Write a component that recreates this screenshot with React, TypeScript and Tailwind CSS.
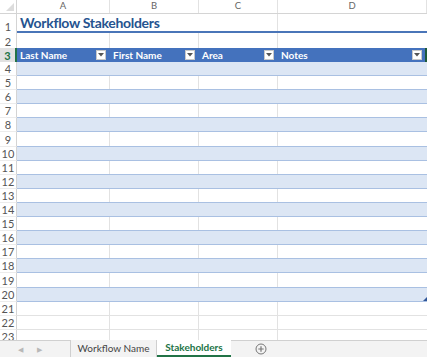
import React from "react";

const cols = [
  { w: "w-[93px]", label: "A", head: "Last Name" },
  { w: "w-[89px]", label: "B", head: "First Name" },
  { w: "w-[79px]", label: "C", head: "Area" },
  { w: "flex-1", label: "D", head: "Notes" },
];

function Drop() {
  return (
    <div className="w-[10px] h-[10px] bg-white border border-[#c8c8c8] flex items-center justify-center mr-[3px]">
      <svg width="6" height="4" viewBox="0 0 6 4">
        <path d="M0 0 L6 0 L3 3.5 Z" fill="#555" />
      </svg>
    </div>
  );
}

export default function App() {
  const rows = Array.from({ length: 20 }, (_, i) => i + 4);
  return (
    <div
      className="w-[427px] h-[357px] bg-white overflow-hidden flex flex-col"
      style={{ fontFamily: "Lato, 'Open Sans', 'Liberation Sans', sans-serif" }}
    >
      <div className="flex-1 overflow-hidden flex flex-col">
        {/* column headers */}
        <div className="flex h-[14px] shrink-0 border-b border-[#d4d4d4] bg-white">
          <div className="w-[17px] border-r border-[#d4d4d4] relative">
            <svg className="absolute right-[2px] bottom-[2px]" width="8" height="8" viewBox="0 0 8 8">
              <path d="M8 0 L8 8 L0 8 Z" fill="#dcdcdc" />
            </svg>
          </div>
          {cols.map((c) => (
            <div
              key={c.label}
              className={`${c.w} border-r border-[#e2e2e2] flex items-center justify-center text-[9.5px] text-[#666]`}
            >
              {c.label}
            </div>
          ))}
        </div>
        {/* row 1 */}
        <div className="flex h-[19px] shrink-0">
          <div className="w-[17px] border-r border-[#d4d4d4] flex items-end justify-center pb-[1px] text-[11px] leading-none text-[#555]">1</div>
          <div className="flex-1 relative border-b-2 border-[#4a75b8]">
            <div className="absolute left-[3px] top-[0px] text-[14px] leading-[17px] font-bold tracking-[-0.3px] text-[#25538f] whitespace-nowrap">
              Workflow Stakeholders
            </div>
            <div className="flex h-full">
              <div className="w-[93px] border-r border-white" />
              <div className="w-[89px] border-r border-white" />
              <div className="w-[79px] border-r border-[#e2e2e2]" />
              <div className="flex-1" />
            </div>
          </div>
        </div>
        {/* row 2 */}
        <div className="flex h-[15px] shrink-0">
          <div className="w-[17px] border-r border-[#d4d4d4] flex items-end justify-center pb-[1px] text-[11px] leading-none text-[#555]">2</div>
          <div className="w-[93px] border-r border-[#e2e2e2]" />
          <div className="w-[89px] border-r border-[#e2e2e2]" />
          <div className="w-[79px] border-r border-[#e2e2e2]" />
          <div className="flex-1" />
        </div>
        {/* row 3 header */}
        <div className="flex h-[14px] shrink-0">
          <div className="w-[17px] bg-[#e1e1e1] border-r-2 border-[#217346] flex items-end justify-center pb-[1px] text-[11px] leading-none font-bold text-[#217346]">3</div>
          {cols.map((c) => (
            <div
              key={c.label}
              className={`${c.w} bg-[#4472bd] flex items-center justify-between text-[10px] font-bold text-white border-r border-[#4472bd] last:border-r-2 last:border-r-[#1e5a3a]`}
            >
              <span className="pl-[3px] leading-none">{c.head}</span>
              <Drop />
            </div>
          ))}
        </div>
        {rows.map((r) => {
          const inTable = r <= 20;
          const band = inTable && r % 2 === 0;
          return (
            <div key={r} className="flex h-[14.1px] shrink-0">
              <div className="w-[17px] border-r border-[#d4d4d4] border-b border-b-[#ececec] flex items-end justify-center pb-[1px] text-[11px] leading-none text-[#555]">
                {r}
              </div>
              {band ? (
                <div className="flex-1 bg-[#dce6f4] border-b border-[#a9c0e2] relative">
                  {r === 20 && (
                    <svg className="absolute right-0 bottom-0" width="4" height="4" viewBox="0 0 4 4">
                      <path d="M4 0 L4 4 L0 4 Z" fill="#2f5597" />
                    </svg>
                  )}
                </div>
              ) : (
                <div className={`flex-1 flex border-b ${inTable ? "border-[#a9c0e2]" : "border-[#e2e2e2]"}`}>
                  <div className="w-[93px] border-r border-[#e2e2e2]" />
                  <div className="w-[89px] border-r border-[#e2e2e2]" />
                  <div className="w-[79px] border-r border-[#e2e2e2]" />
                  <div className="flex-1" />
                </div>
              )}
            </div>
          );
        })}
      </div>
      {/* tab bar */}
      <div className="h-[17px] shrink-0 bg-[#f3f3f3] border-t border-[#d0d0d0] flex items-stretch text-[10px]">
        <div className="w-[70px] flex items-center gap-[14px] pl-[18px] text-[#b8b8b8] text-[7px]">
          <span>◀</span>
          <span>▶</span>
        </div>
        <div className="w-[87px] border-l border-r border-[#cfcfcf] flex items-center justify-center text-[#444] -mt-px bg-[#f3f3f3]">
          Workflow Name
        </div>
        <div className="w-[74px] bg-white -mt-px flex items-center justify-center font-bold text-[#217346] border-b-2 border-[#217346] relative">
          Stakeholders
        </div>
        <div className="w-[60px] flex items-center justify-center">
          <svg width="12" height="12" viewBox="0 0 12 12">
            <circle cx="6" cy="6" r="5" fill="none" stroke="#777" strokeWidth="1" />
            <path d="M6 3.3 V8.7 M3.3 6 H8.7" stroke="#777" strokeWidth="1.2" />
          </svg>
        </div>
      </div>
    </div>
  );
}
